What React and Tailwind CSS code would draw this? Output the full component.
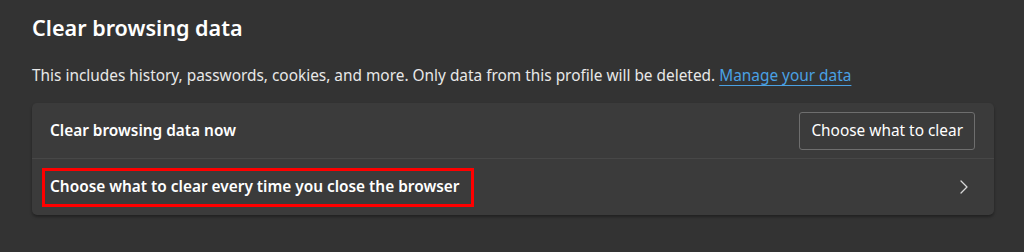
const FONT = { fontFamily: '"Segoe UI", "Noto Sans", "Open Sans", sans-serif' };

export default function App() {
  return (
    <div className="w-[1024px] h-[252px] bg-[#333333] text-white px-8 pt-[13px]" style={FONT}>
      <h1 className="text-[21.6px] leading-[30px] font-semibold">Clear browsing data</h1>

      <p className="mt-[21px] text-[15.4px] leading-[24px] text-[#e8e8e8]">
        This includes history, passwords, cookies, and more. Only data from this profile will be deleted.{" "}
        <a href="#" className="text-[#4aa1e3] underline underline-offset-[4px] decoration-1">
          Manage your data
        </a>
      </p>

      {/* settings card */}
      <div className="mt-[15px] w-[962px] bg-[#3b3b3b] rounded-[5px] shadow-[0_2px_3px_rgba(0,0,0,0.35)]">
        <div className="h-[56px] flex items-center justify-between pl-[18px] pr-[19px] border-b border-[#474747]">
          <span className="text-[15.4px] font-semibold">Clear browsing data now</span>
          <button className="h-[38px] px-[11px] border border-[#6e6e6e] rounded-[3px] text-[15.4px] text-white bg-[#3b3b3b]">
            Choose what to clear
          </button>
        </div>
        <div className="h-[56px] flex items-center justify-between pl-[10px] pr-[26px]">
          <div className="h-[39px] flex items-center px-[5px] border-[3px] border-[#ff0000] w-[432px]">
            <span className="text-[15.4px] font-semibold whitespace-nowrap">
              Choose what to clear every time you close the browser
            </span>
          </div>
          <svg width="8" height="14" viewBox="0 0 8 14" className="text-[#d8d8d8]">
            <path d="M1 1 L7 7 L1 13" fill="none" stroke="currentColor" strokeWidth="1.3" strokeLinecap="round" strokeLinejoin="round" />
          </svg>
        </div>
      </div>
    </div>
  );
}
